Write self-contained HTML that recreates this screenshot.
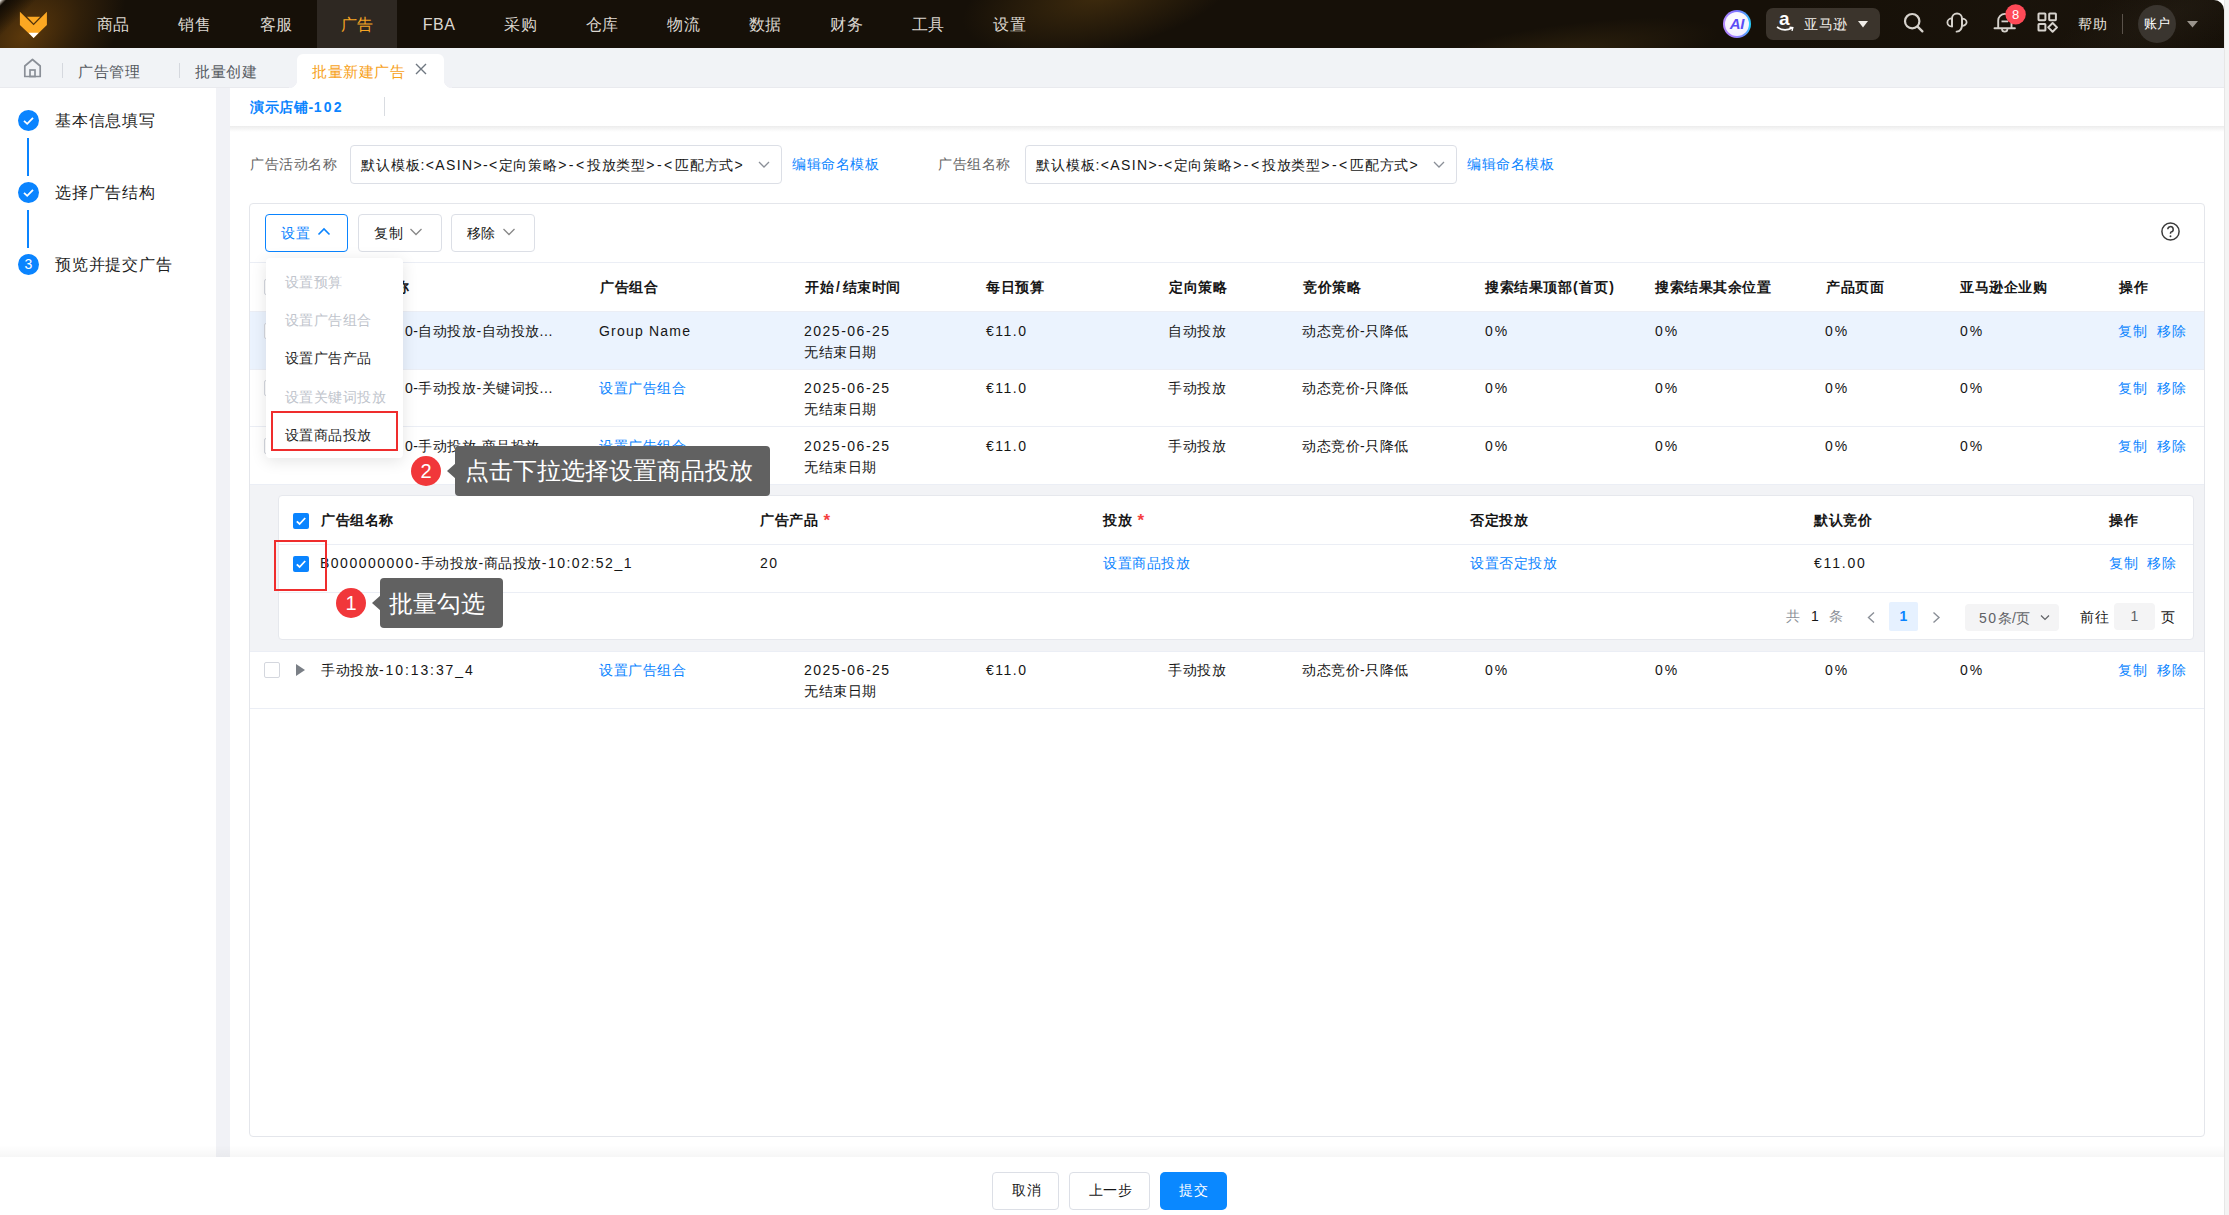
<!DOCTYPE html>
<html><head><meta charset="utf-8">
<style>
*{box-sizing:border-box;margin:0;padding:0}
html,body{width:2229px;height:1215px;overflow:hidden;background:#fff}
body{font-family:"Liberation Sans",sans-serif;font-size:14px;color:#161616;position:relative}
.a{position:absolute;white-space:nowrap}
.t{position:absolute;white-space:nowrap;line-height:20px;letter-spacing:0.5px}
i{font-style:normal}
.n{letter-spacing:1.5px}
.blue{color:#0a84ff}
.gray{color:#666}
.b{font-weight:bold}
.l{letter-spacing:1.1px}
#hdr{position:absolute;left:0;top:0;width:2224px;height:48px;border-top-right-radius:10px;overflow:hidden;
 background:#161008}
#hdr .g{position:absolute;border-radius:50%}
#hdr .glowL{position:absolute;left:-90px;top:-40px;width:230px;height:150px;border-radius:50%;transform:rotate(-40deg);
 background:radial-gradient(closest-side,rgba(105,64,12,.85),rgba(80,50,12,.45) 55%,rgba(22,16,8,0) 100%)}
#hdr .glowR{position:absolute;left:1780px;top:-200px;width:500px;height:400px;border-radius:50%;
 background:radial-gradient(closest-side,rgba(50,40,28,.12),rgba(26,18,9,0) 100%)}
.nav{position:absolute;top:1px;height:48px;line-height:48px;font-size:16px;font-weight:500;color:#dcd7d0;text-align:center;width:80px;letter-spacing:0.5px}
.nav.act{top:0;line-height:50px}
.nav.act{background:#2e2822;color:#f5a524}
#tabs{position:absolute;left:0;top:48px;width:2224px;height:40px;background:#f1f3f6;border-bottom:1px solid #e9eaee}
#side{position:absolute;left:0;top:88px;width:216px;height:1070px;background:#fff}
#gap{position:absolute;left:216px;top:88px;width:14px;height:1070px;background:#f1f2f6}
#main{position:absolute;left:230px;top:88px;width:1994px;height:1070px;background:#fff}
#scroll{position:absolute;left:2224px;top:0;width:5px;height:1215px;background:#f4f4f4;border-left:1px solid #e6e6e6}
.sel{position:absolute;height:38px;border:1px solid #dcdfe6;border-radius:4px;background:#fff}
.btn{position:absolute;height:38px;border:1px solid #dcdfe6;border-radius:4px;background:#fff}
.card{position:absolute;border:1px solid #e4e6eb;border-radius:4px;background:#fff}
.hline{position:absolute;height:1px;background:#ebeef5}
.th{position:absolute;white-space:nowrap;line-height:20px;font-weight:bold;color:#1f1f1f}
.cb{position:absolute;width:16px;height:16px;border:1px solid #d4d7de;border-radius:2px;background:#fff}
.cbon{position:absolute;width:16px;height:16px;border-radius:2px;background:#0a84ff}
</style></head><body>

<div id="hdr">
  <div class="glowL"></div>
  <div class="glowR"></div>
  <div class="a" style="left:0;top:0;width:50px;height:40px;background:linear-gradient(135deg,rgba(255,255,255,.95) 0px,rgba(255,255,255,.5) 2px,rgba(15,10,4,.9) 4.5px,rgba(15,10,4,.55) 14px,rgba(15,10,4,0) 26px)"></div>
  <div class="g" style="left:960px;top:-60px;width:280px;height:110px;transform:rotate(-12deg);background:radial-gradient(closest-side,rgba(95,65,18,.55),rgba(22,16,8,0))"></div>
  <div class="g" style="left:1400px;top:25px;width:320px;height:60px;transform:rotate(-8deg);background:radial-gradient(closest-side,rgba(80,58,20,.4),rgba(22,16,8,0))"></div>
  <div class="g" style="left:2040px;top:-30px;width:260px;height:90px;transform:rotate(-25deg);background:radial-gradient(closest-side,rgba(70,62,50,.18),rgba(22,16,8,0))"></div>
  <svg class="a" style="left:0;top:0" width="60" height="48" viewBox="0 0 60 48">
    <polygon points="19.9,11.8 33.6,25.3 46.9,11.8 46.9,25 33.6,38.1 19.9,25" fill="#fca822"/>
    <polygon points="27,16.8 40.1,16.8 33.6,23.4" fill="#fca822"/>
    <polygon points="28.5,32.8 38.7,32.8 33.6,38.1" fill="#fff"/>
  </svg>
  <div class="nav" style="left:73px">商品</div>
  <div class="nav" style="left:154.5px">销售</div>
  <div class="nav" style="left:236px">客服</div>
  <div class="nav act" style="left:317px">广告</div>
  <div class="nav" style="left:399px">FBA</div>
  <div class="nav" style="left:480.5px">采购</div>
  <div class="nav" style="left:562px">仓库</div>
  <div class="nav" style="left:643.5px">物流</div>
  <div class="nav" style="left:725px">数据</div>
  <div class="nav" style="left:806.5px">财务</div>
  <div class="nav" style="left:888px">工具</div>
  <div class="nav" style="left:969.5px">设置</div>
  <!-- right tools -->
  <div class="a" style="left:1723px;top:10px;width:28px;height:28px;border-radius:50%;background:conic-gradient(from 0deg,#7b74ff 0deg,#4aa8ff 50deg,#22d3ff 95deg,#6f8cff 150deg,#a97cff 200deg,#b58dff 280deg,#8d78ff 340deg,#7b74ff 360deg)"></div>
  <div class="a" style="left:1725px;top:12px;width:24px;height:24px;border-radius:50%;background:radial-gradient(circle at 45% 35%,#ffffff,#efe9ff)"></div>
  <div class="a" style="left:1727px;top:13px;width:20px;color:#5b4cf5;font-weight:bold;font-style:italic;font-size:15px;line-height:22px;text-align:center;letter-spacing:-0.3px">AI</div>
  <div class="a" style="left:1766px;top:8px;width:114px;height:32px;border-radius:7px;background:#3b342c"></div>
  <div class="a" style="left:1779px;top:7px;color:#fff;font-weight:bold;font-size:19px;line-height:24px">a</div>
  <svg class="a" style="left:1775px;top:25px" width="20" height="8" viewBox="0 0 20 8"><path d="M2 2 Q9 7 17 3" stroke="#fff" stroke-width="1.7" fill="none"/><path d="M14.5 2.2 L17.8 2.6 L17 5.8" stroke="#fff" stroke-width="1.4" fill="none"/></svg>
  <div class="a" style="left:1804px;top:13px;color:#f0ede8;font-size:14px;line-height:22px;letter-spacing:0.5px">亚马逊</div>
  <svg class="a" style="left:1858px;top:21px" width="10" height="7" viewBox="0 0 10 7"><polygon points="0,0 10,0 5,6.5" fill="#f0ede8"/></svg>
  <svg class="a" style="left:1900px;top:9px" width="26" height="26" viewBox="0 0 26 26"><circle cx="12.2" cy="12.2" r="7.2" stroke="#d6d2cc" stroke-width="2.2" fill="none"/><path d="M17.6 17.6 L22.4 22.4" stroke="#d6d2cc" stroke-width="2.3" stroke-linecap="round"/></svg>
  <svg class="a" style="left:1940px;top:8px" width="32" height="28" viewBox="0 0 32 28"><path d="M12 18.4 V10.5 A5 5 0 0 1 22 10.5 V17 Q22 23.2 16.6 23.6" stroke="#d6d2cc" stroke-width="1.9" fill="none" stroke-linecap="round"/><path d="M12 10.4 A4.6 4 0 0 0 12 18.4 Z" stroke="#d6d2cc" stroke-width="1.8" fill="none" stroke-linejoin="round"/><path d="M22 10.6 A4.6 3.6 0 0 1 22 17.8 Z" stroke="#d6d2cc" stroke-width="1.8" fill="none" stroke-linejoin="round"/></svg>
  <svg class="a" style="left:1988px;top:2px" width="76" height="36" viewBox="0 0 76 36"><path d="M6.5 26.2 H26.9" stroke="#d6d2cc" stroke-width="1.9" stroke-linecap="round"/><path d="M10.2 26 V18.5 A6.65 6.65 0 0 1 23.5 18.5 V26" stroke="#d6d2cc" stroke-width="1.9" fill="none"/><path d="M13.5 19.4 H20.1" stroke="#d6d2cc" stroke-width="1.8"/><path d="M14 27 A2.7 2.6 0 0 0 19.4 27" stroke="#d6d2cc" stroke-width="1.8" fill="none"/>
  <circle cx="27.6" cy="12.4" r="10.2" fill="#ff4a57"/><text x="27.6" y="17" text-anchor="middle" font-family="Liberation Sans" font-size="13" fill="#fff">8</text>
  <rect x="50.5" y="11.5" width="6.9" height="6.7" rx="0.6" stroke="#d6d2cc" stroke-width="2" fill="none"/><rect x="61.2" y="11.5" width="6.7" height="6.7" rx="0.6" stroke="#d6d2cc" stroke-width="2" fill="none"/><rect x="50.5" y="22" width="6.9" height="6.5" rx="0.6" stroke="#d6d2cc" stroke-width="2" fill="none"/><path d="M64.6 21 L69 25.4 L64.6 29.8 L60.2 25.4 Z" stroke="#d6d2cc" stroke-width="2" fill="none" stroke-linejoin="round"/></svg>
  <div class="a" style="left:2078px;top:13px;color:#e8e4de;font-size:14px;line-height:22px;letter-spacing:0.5px">帮助</div>
  <div class="a" style="left:2122px;top:14px;width:1px;height:20px;background:#5a524a"></div>
  <div class="a" style="left:2138px;top:5px;width:38px;height:38px;border-radius:50%;background:#3a352f;color:#fff;font-size:13px;line-height:38px;text-align:center;letter-spacing:0.5px">账户</div>
  <svg class="a" style="left:2187px;top:21px" width="11" height="7" viewBox="0 0 11 7"><polygon points="0,0 11,0 5.5,6.5" fill="#9a948c"/></svg>
</div>

<div id="tabs">
  <svg class="a" style="left:23px;top:10px" width="19" height="20" viewBox="0 0 19 20"><path d="M1.8 18.5 V8 L9.5 1.5 L17.2 8 V18.5 Z" stroke="#8a8f97" stroke-width="1.7" fill="none" stroke-linejoin="round"/><rect x="7" y="12" width="5" height="6.5" stroke="#8a8f97" stroke-width="1.7" fill="none"/></svg>
  <div class="a" style="left:62px;top:15px;width:1px;height:15px;background:#d5d8de"></div>
  <div class="a" style="left:78px;top:13px;font-size:15px;line-height:22px;letter-spacing:0.5px;color:#555a61">广告管理</div>
  <div class="a" style="left:179px;top:15px;width:1px;height:15px;background:#d5d8de"></div>
  <div class="a" style="left:195px;top:13px;font-size:15px;line-height:22px;letter-spacing:0.5px;color:#555a61">批量创建</div>
  <div class="a" style="left:297px;top:6px;width:147px;height:34px;background:#fff;border-radius:6px 6px 0 0"></div>
  <div class="a" style="left:289px;top:32px;width:8px;height:8px;background:radial-gradient(circle at 0 0,#f1f2f6 8px,#fff 8.5px)"></div>
  <div class="a" style="left:444px;top:32px;width:8px;height:8px;background:radial-gradient(circle at 100% 0,#f1f2f6 8px,#fff 8.5px)"></div>
  <div class="a" style="left:312px;top:13px;font-size:15px;line-height:22px;letter-spacing:0.5px;color:#f7a21b">批量新建广告</div>
  <svg class="a" style="left:415px;top:15px" width="12" height="12" viewBox="0 0 12 12"><path d="M1 1 L11 11 M11 1 L1 11" stroke="#6f7781" stroke-width="1.4"/></svg>
</div>
<div id="side">
  <div class="a" style="left:18px;top:22px;width:21px;height:21px;border-radius:50%;background:#0a84ff"></div>
  <svg class="a" style="left:18px;top:22px" width="21" height="21" viewBox="0 0 21 21"><path d="M6 10.8 L9.2 13.8 L15 7.8" stroke="#fff" stroke-width="1.8" fill="none"/></svg>
  <div class="a" style="left:55px;top:22px;font-size:16px;line-height:22px;color:#1f1f1f;letter-spacing:0.8px">基本信息填写</div>
  <div class="a" style="left:27px;top:50px;width:2px;height:38px;background:#0a84ff"></div>
  <div class="a" style="left:18px;top:94px;width:21px;height:21px;border-radius:50%;background:#0a84ff"></div>
  <svg class="a" style="left:18px;top:94px" width="21" height="21" viewBox="0 0 21 21"><path d="M6 10.8 L9.2 13.8 L15 7.8" stroke="#fff" stroke-width="1.8" fill="none"/></svg>
  <div class="a" style="left:55px;top:94px;font-size:16px;line-height:22px;color:#1f1f1f;letter-spacing:0.8px">选择广告结构</div>
  <div class="a" style="left:27px;top:122px;width:2px;height:38px;background:#0a84ff"></div>
  <div class="a" style="left:18px;top:166px;width:21px;height:21px;border-radius:50%;background:#0a84ff;color:#fff;font-size:14px;line-height:21px;text-align:center">3</div>
  <div class="a" style="left:55px;top:166px;font-size:16px;line-height:22px;color:#1f1f1f;letter-spacing:0.8px">预览并提交广告</div>
</div>
<div id="gap"></div>
<div id="main">
  <div class="a" style="left:0;top:38px;width:1994px;height:6px;background:linear-gradient(#ececec,rgba(255,255,255,0))"></div>
  <div class="a b blue" style="left:20px;top:9px;line-height:20px;font-size:14px;letter-spacing:0.6px">演示店铺-<span style="letter-spacing:2.2px">102</span></div>
  <div class="a" style="left:154px;top:9px;width:1px;height:19px;background:#d9dce1"></div>
</div>
<div id="scroll"></div>

<div class="t gray" style="left:250px;top:154px">广告活动名称</div>
<div class="sel" style="left:350px;top:145px;width:432px;height:39px"></div>
<div class="t" style="left:361px;top:155px;letter-spacing:0.9px">默认模板<i style="letter-spacing:1.35px">:&lt;ASIN&gt;-&lt;</i>定向策略<i style="letter-spacing:2.5px">&gt;-&lt;</i>投放类型<i style="letter-spacing:2.5px">&gt;-&lt;</i>匹配方式<i style="letter-spacing:2px">&gt;</i></div>
<svg class="a" style="left:758px;top:160px" width="12" height="9" viewBox="0 0 12 9"><path d="M1 2 L6 7 L11 2" stroke="#8a8f97" stroke-width="1.3" fill="none"/></svg>
<div class="t blue" style="left:792px;top:154px">编辑命名模板</div>
<div class="t gray" style="left:938px;top:154px">广告组名称</div>
<div class="sel" style="left:1025px;top:145px;width:432px;height:39px"></div>
<div class="t" style="left:1036px;top:155px;letter-spacing:0.9px">默认模板<i style="letter-spacing:1.35px">:&lt;ASIN&gt;-&lt;</i>定向策略<i style="letter-spacing:2.5px">&gt;-&lt;</i>投放类型<i style="letter-spacing:2.5px">&gt;-&lt;</i>匹配方式<i style="letter-spacing:2px">&gt;</i></div>
<svg class="a" style="left:1433px;top:160px" width="12" height="9" viewBox="0 0 12 9"><path d="M1 2 L6 7 L11 2" stroke="#8a8f97" stroke-width="1.3" fill="none"/></svg>
<div class="t blue" style="left:1467px;top:154px">编辑命名模板</div>
<!--CARD-->
<div class="card" style="left:249px;top:203px;width:1956px;height:934px"></div>
<div class="btn" style="left:265px;top:214px;width:83px;height:38px;border-color:#0a84ff"></div>
<div class="t blue" style="left:281px;top:222.5px;">设置</div>
<svg class="a" style="left:317px;top:227px" width="14" height="9" viewBox="0 0 14 9"><path d="M1.5 7.5 L7 2 L12.5 7.5" stroke="#0a84ff" stroke-width="1.6" fill="none"/></svg>
<div class="btn" style="left:358px;top:214px;width:84px;height:38px"></div>
<div class="t " style="left:374px;top:222.5px;">复制</div>
<svg class="a" style="left:409px;top:227px" width="14" height="9" viewBox="0 0 14 9"><path d="M1.5 2 L7 7.5 L12.5 2" stroke="#888" stroke-width="1.3" fill="none"/></svg>
<div class="btn" style="left:451px;top:214px;width:84px;height:38px"></div>
<div class="t " style="left:466.5px;top:222.5px;">移除</div>
<svg class="a" style="left:502px;top:227px" width="14" height="9" viewBox="0 0 14 9"><path d="M1.5 2 L7 7.5 L12.5 2" stroke="#888" stroke-width="1.3" fill="none"/></svg>
<svg class="a" style="left:2160px;top:221px" width="21" height="21" viewBox="0 0 21 21"><circle cx="10.5" cy="10.5" r="8.6" stroke="#3a3a3a" stroke-width="1.5" fill="none"/><path d="M7.8 8.3 A2.7 2.7 0 1 1 11.3 10.9 Q10.5 11.3 10.5 12.3 V12.8" stroke="#3a3a3a" stroke-width="1.5" fill="none"/><circle cx="10.5" cy="15.2" r="0.95" fill="#3a3a3a"/></svg>
<div class="hline" style="left:250px;top:262px;width:1954px"></div>
<div class="cb" style="left:264px;top:279px"></div>
<div class="t b" style="left:322px;top:277px;">广告活动名称</div>
<div class="t b" style="left:600px;top:277px;">广告组合</div>
<div class="t b" style="left:805px;top:277px;">开始<i style="letter-spacing:3px;margin-left:2px">/</i>结束时间</div>
<div class="t b" style="left:986px;top:277px;">每日预算</div>
<div class="t b" style="left:1169px;top:277px;">定向策略</div>
<div class="t b" style="left:1303px;top:277px;">竞价策略</div>
<div class="t b" style="left:1485px;top:277px;">搜索结果顶部<i style="letter-spacing:1.5px;margin-left:1px">(</i>首页<i style="margin-left:1px">)</i></div>
<div class="t b" style="left:1655px;top:277px;">搜索结果其余位置</div>
<div class="t b" style="left:1826px;top:277px;">产品页面</div>
<div class="t b" style="left:1960px;top:277px;">亚马逊企业购</div>
<div class="t b" style="left:2119px;top:277px;">操作</div>
<div class="a" style="left:250px;top:311px;width:1954px;height:58px;background:#ebf3fe"></div>
<div class="hline" style="left:250px;top:311px;width:1954px"></div>
<div class="hline" style="left:250px;top:369px;width:1954px"></div>
<div class="hline" style="left:250px;top:426px;width:1954px"></div>
<div class="hline" style="left:250px;top:484px;width:1954px"></div>
<div class="cb" style="left:264px;top:323px"></div>
<div class="t " style="left:405px;top:321px;">0-自动投放-自动投放...</div>
<div class="t " style="left:599px;top:321px;letter-spacing:1.2px">Group Name</div>
<div class="t n" style="left:804px;top:321px;">2025-06-25</div>
<div class="t " style="left:804px;top:342px;">无结束日期</div>
<div class="t n" style="left:986px;top:321px;">€11.0</div>
<div class="t " style="left:1168px;top:321px;">自动投放</div>
<div class="t " style="left:1302px;top:321px;">动态竞价-只降低</div>
<div class="t " style="left:1485px;top:321px;letter-spacing:2px">0%</div>
<div class="t " style="left:1655px;top:321px;letter-spacing:2px">0%</div>
<div class="t " style="left:1825px;top:321px;letter-spacing:2px">0%</div>
<div class="t " style="left:1960px;top:321px;letter-spacing:2px">0%</div>
<div class="t blue" style="left:2118px;top:321px;">复制</div>
<div class="t blue" style="left:2157px;top:321px;">移除</div>
<div class="cb" style="left:264px;top:380px"></div>
<div class="t " style="left:405px;top:378px;">0-手动投放-关键词投...</div>
<div class="t blue" style="left:599px;top:378px;">设置广告组合</div>
<div class="t n" style="left:804px;top:378px;">2025-06-25</div>
<div class="t " style="left:804px;top:399px;">无结束日期</div>
<div class="t n" style="left:986px;top:378px;">€11.0</div>
<div class="t " style="left:1168px;top:378px;">手动投放</div>
<div class="t " style="left:1302px;top:378px;">动态竞价-只降低</div>
<div class="t " style="left:1485px;top:378px;letter-spacing:2px">0%</div>
<div class="t " style="left:1655px;top:378px;letter-spacing:2px">0%</div>
<div class="t " style="left:1825px;top:378px;letter-spacing:2px">0%</div>
<div class="t " style="left:1960px;top:378px;letter-spacing:2px">0%</div>
<div class="t blue" style="left:2118px;top:378px;">复制</div>
<div class="t blue" style="left:2157px;top:378px;">移除</div>
<div class="cb" style="left:264px;top:438px"></div>
<div class="t " style="left:405px;top:436px;">0-手动投放-商品投放...</div>
<div class="t blue" style="left:599px;top:436px;">设置广告组合</div>
<div class="t n" style="left:804px;top:436px;">2025-06-25</div>
<div class="t " style="left:804px;top:457px;">无结束日期</div>
<div class="t n" style="left:986px;top:436px;">€11.0</div>
<div class="t " style="left:1168px;top:436px;">手动投放</div>
<div class="t " style="left:1302px;top:436px;">动态竞价-只降低</div>
<div class="t " style="left:1485px;top:436px;letter-spacing:2px">0%</div>
<div class="t " style="left:1655px;top:436px;letter-spacing:2px">0%</div>
<div class="t " style="left:1825px;top:436px;letter-spacing:2px">0%</div>
<div class="t " style="left:1960px;top:436px;letter-spacing:2px">0%</div>
<div class="t blue" style="left:2118px;top:436px;">复制</div>
<div class="t blue" style="left:2157px;top:436px;">移除</div>
<div class="cb" style="left:264px;top:662px"></div>
<svg class="a" style="left:295px;top:664px" width="11" height="12" viewBox="0 0 11 12"><polygon points="1,0 10,6 1,12" fill="#7a7f86"/></svg>
<div class="t " style="left:321px;top:660px;">手动投放<i style="letter-spacing:1.9px">-10:13:37_4</i></div>
<div class="t blue" style="left:599px;top:660px;">设置广告组合</div>
<div class="t n" style="left:804px;top:660px;">2025-06-25</div>
<div class="t " style="left:804px;top:681px;">无结束日期</div>
<div class="t n" style="left:986px;top:660px;">€11.0</div>
<div class="t " style="left:1168px;top:660px;">手动投放</div>
<div class="t " style="left:1302px;top:660px;">动态竞价-只降低</div>
<div class="t " style="left:1485px;top:660px;letter-spacing:2px">0%</div>
<div class="t " style="left:1655px;top:660px;letter-spacing:2px">0%</div>
<div class="t " style="left:1825px;top:660px;letter-spacing:2px">0%</div>
<div class="t " style="left:1960px;top:660px;letter-spacing:2px">0%</div>
<div class="t blue" style="left:2118px;top:660px;">复制</div>
<div class="t blue" style="left:2157px;top:660px;">移除</div>
<div class="a" style="left:250px;top:485px;width:1954px;height:166px;background:#f2f3f6"></div>
<div class="hline" style="left:250px;top:651px;width:1954px"></div>
<div class="hline" style="left:250px;top:708px;width:1954px"></div>
<div class="card" style="left:278px;top:495px;width:1916px;height:145px;border-color:#e6e8ed"></div>
<div class="hline" style="left:279px;top:544px;width:1914px"></div>
<div class="hline" style="left:279px;top:592px;width:1914px"></div>
<div class="cbon" style="left:293px;top:513px"></div>
<svg class="a" style="left:293px;top:513px" width="16" height="16" viewBox="0 0 16 16"><path d="M3.8 8.3 L6.6 11 L12.2 5" stroke="#fff" stroke-width="1.8" fill="none"/></svg>
<div class="t b" style="left:321px;top:510px;">广告组名称</div>
<div class="t b" style="left:760px;top:510px;">广告产品 <span style="color:#f53f3f;font-size:17px;font-weight:bold;position:relative;top:1px;margin-left:1px">*</span></div>
<div class="t b" style="left:1103px;top:510px;">投放 <span style="color:#f53f3f;font-size:17px;font-weight:bold;position:relative;top:1px;margin-left:1px">*</span></div>
<div class="t b" style="left:1470px;top:510px;">否定投放</div>
<div class="t b" style="left:1814px;top:510px;">默认竞价</div>
<div class="t b" style="left:2109px;top:510px;">操作</div>
<div class="cbon" style="left:293px;top:556px"></div>
<svg class="a" style="left:293px;top:556px" width="16" height="16" viewBox="0 0 16 16"><path d="M3.8 8.3 L6.6 11 L12.2 5" stroke="#fff" stroke-width="1.8" fill="none"/></svg>
<div class="t " style="left:320px;top:553px;"><i class="n">B000000000-</i>手动投放-商品投放<i class="n">-10:02:52_1</i></div>
<div class="t n" style="left:760px;top:553px;">20</div>
<div class="t blue" style="left:1103px;top:553px;">设置商品投放</div>
<div class="t blue" style="left:1470px;top:553px;">设置否定投放</div>
<div class="t n" style="left:1814px;top:553px;letter-spacing:1.8px">€11.00</div>
<div class="t blue" style="left:2109px;top:553px;">复制</div>
<div class="t blue" style="left:2147px;top:553px;">移除</div>
<div class="t " style="left:1786px;top:606px;color:#8a8f97">共</div>
<div class="t n" style="left:1811px;top:606px;">1</div>
<div class="t " style="left:1829px;top:606px;color:#8a8f97">条</div>
<svg class="a" style="left:1866px;top:611px" width="11" height="13" viewBox="0 0 11 13"><path d="M8 1.5 L2.5 6.5 L8 11.5" stroke="#8a8f97" stroke-width="1.4" fill="none"/></svg>
<div class="a" style="left:1889px;top:602px;width:29px;height:29px;background:#e6f1ff;border-radius:2px;color:#0a84ff;font-weight:bold;line-height:29px;text-align:center">1</div>
<svg class="a" style="left:1931px;top:611px" width="11" height="13" viewBox="0 0 11 13"><path d="M2.5 1.5 L8 6.5 L2.5 11.5" stroke="#8a8f97" stroke-width="1.4" fill="none"/></svg>
<div class="a" style="left:1965px;top:604px;width:94px;height:27px;background:#f4f4f5;border-radius:4px"></div>
<div class="t " style="left:1979px;top:608px;color:#606266"><i class="n">50</i>条/页</div>
<svg class="a" style="left:2040px;top:614px" width="10" height="7" viewBox="0 0 10 7"><path d="M1 1.5 L5 5.5 L9 1.5" stroke="#606266" stroke-width="1.2" fill="none"/></svg>
<div class="t " style="left:2080px;top:607px;">前往</div>
<div class="a" style="left:2114px;top:603px;width:41px;height:27px;background:#f4f4f5;border-radius:4px;color:#606266;line-height:27px;text-align:center">1</div>
<div class="t " style="left:2161px;top:607px;">页</div>
<div class="a" style="left:266px;top:258px;width:137px;height:200px;background:#fff;border-radius:4px;box-shadow:0 3px 16px rgba(0,0,0,.11)"></div>
<div class="t " style="left:284.5px;top:271.5px;color:#c0c4cc">设置预算</div>
<div class="t " style="left:284.5px;top:309.8px;color:#c0c4cc">设置广告组合</div>
<div class="t " style="left:284.5px;top:348px;color:#1f1f1f">设置广告产品</div>
<div class="t " style="left:284.5px;top:386.5px;color:#c0c4cc">设置关键词投放</div>
<div class="t " style="left:284.5px;top:424.7px;color:#1f1f1f">设置商品投放</div>
<div class="a" style="left:271px;top:411px;width:127px;height:40px;border:2px solid #ef2d2d"></div>
<div class="a" style="left:411px;top:456px;width:30px;height:30px;border-radius:50%;background:#f1373a;color:#fff;font-size:20px;line-height:30px;text-align:center">2</div>
<div class="a" style="left:455px;top:446px;width:315px;height:50px;border-radius:4px;background:#616161"></div>
<svg class="a" style="left:447px;top:463px" width="9" height="16" viewBox="0 0 9 16"><polygon points="9,0 0,8 9,16" fill="#616161"/></svg>
<div class="a" style="left:465px;top:456px;font-size:24px;line-height:30px;color:#fff">点击下拉选择设置商品投放</div>
<div class="a" style="left:274px;top:540px;width:53px;height:51px;border:2px solid #ef2d2d"></div>
<div class="a" style="left:336px;top:588px;width:30px;height:30px;border-radius:50%;background:#f1373a;color:#fff;font-size:20px;line-height:30px;text-align:center">1</div>
<div class="a" style="left:380px;top:578px;width:123px;height:50px;border-radius:4px;background:#616161"></div>
<svg class="a" style="left:372px;top:595px" width="9" height="16" viewBox="0 0 9 16"><polygon points="9,0 0,8 9,16" fill="#616161"/></svg>
<div class="a" style="left:389px;top:589px;font-size:24px;line-height:30px;color:#fff">批量勾选</div>
<div id="foot" class="a" style="left:0;top:1157px;width:2224px;height:58px;background:#fff"></div>
<div class="a" style="left:0;top:1145px;width:2224px;height:12px;background:linear-gradient(rgba(0,0,0,0),rgba(0,0,0,.035))"></div>
<div class="btn" style="left:992px;top:1172px;width:67px;height:38px"></div>
<div class="t " style="left:1012px;top:1180px;">取消</div>
<div class="btn" style="left:1069px;top:1172px;width:81px;height:38px"></div>
<div class="t " style="left:1088.5px;top:1180px;">上一步</div>
<div class="a" style="left:1160px;top:1172px;width:67px;height:38px;background:#0a88ff;border-radius:5px"></div>
<div class="t " style="left:1179px;top:1180px;color:#fff">提交</div>
<!--/CARD-->


</body></html>
